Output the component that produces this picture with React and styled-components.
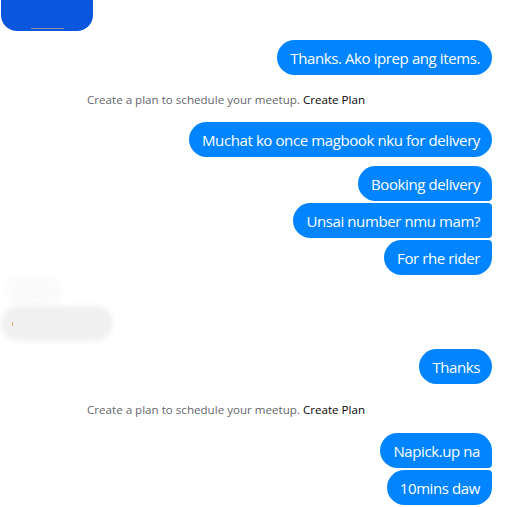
import React from "react";
import styled, { createGlobalStyle, css } from "styled-components";

const Global = createGlobalStyle`
  html, body { margin: 0; padding: 0; background: #ffffff; }
  body { font-family: "Open Sans", "Noto Sans", Arial, sans-serif; }
`;

const Thread = styled.div`
  width: 507px;
  height: 507px;
  overflow: hidden;
  display: flex;
  flex-direction: column;
  background: #fff;
`;

const IncomingTop = styled.div`
  position: relative;
  width: 92px;
  height: 31px;
  margin-left: 1px;
  background: #0a56dc;
  border-radius: 0 0 16px 16px;
  flex-shrink: 0;
`;

const HomeBar = styled.div`
  position: absolute;
  left: 30px;
  bottom: 2px;
  width: 33px;
  height: 1px;
  background: #8a8fa8;
`;

const Row = styled.div`
  display: flex;
  flex-direction: column;
  align-items: flex-end;
  gap: 2px;
  padding-right: 15px;
  margin-top: ${(p) => p.$top || 0}px;
  flex-shrink: 0;
`;

const radius = (pos) => {
  switch (pos) {
    case "first":
      return css`border-radius: 18px 18px 4px 18px;`;
    case "middle":
      return css`border-radius: 18px 4px 4px 18px;`;
    case "last":
      return css`border-radius: 18px 4px 18px 18px;`;
    default:
      return css`border-radius: 18px;`;
  }
};

const Bubble = styled.div`
  box-sizing: border-box;
  height: 35px;
  padding: 0 12px 0 13px;
  display: flex;
  align-items: center;
  background: #0084ff;
  color: #ffffff;
  font-size: 15px;
  letter-spacing: -0.4px;
  line-height: 20px;
  white-space: nowrap;
  ${(p) => radius(p.$pos)}
`;

const Note = styled.div`
  margin-top: ${(p) => p.$top || 0}px;
  padding-left: 87px;
  height: 16px;
  line-height: 16px;
  font-size: 11.6px;
  color: #65676b;
  white-space: nowrap;
  flex-shrink: 0;
`;

const NoteLink = styled.span`
  color: #050505;
`;

const BlurZone = styled.div`
  position: relative;
  height: 66px;
  flex-shrink: 0;
`;

const BlurBlob = styled.div`
  position: absolute;
  left: ${(p) => p.$x}px;
  top: ${(p) => p.$y}px;
  width: ${(p) => p.$w}px;
  height: ${(p) => p.$h}px;
  border-radius: ${(p) => p.$h / 2}px;
  background: ${(p) => p.$bg};
  filter: blur(${(p) => p.$blur}px);
`;

const Speck = styled.div`
  position: absolute;
  left: 12px;
  top: 47px;
  width: 1px;
  height: 4px;
  background: #e0b070;
`;

export default function App() {
  return (
    <>
      <Global />
      <Thread>
        <IncomingTop>
          <HomeBar />
        </IncomingTop>
        <Row $top={9}>
          <Bubble>Thanks. Ako iprep ang items.</Bubble>
        </Row>
        <Note $top={17}>
          Create a plan to schedule your meetup. <NoteLink>Create Plan</NoteLink>
        </Note>
        <Row $top={14}>
          <Bubble>Muchat ko once magbook nku for delivery</Bubble>
        </Row>
        <Row $top={9}>
          <Bubble $pos="first">Booking delivery</Bubble>
          <Bubble $pos="middle">Unsai number nmu mam?</Bubble>
          <Bubble $pos="last">For rhe rider</Bubble>
        </Row>
        <BlurZone>
          <BlurBlob $x={6} $y={2} $w={56} $h={28} $bg="#fafafa" $blur={4} />
          <BlurBlob $x={1} $y={31} $w={112} $h={35} $bg="#f0f0f0" $blur={2.5} />
          <Speck />
        </BlurZone>
        <Row $top={8}>
          <Bubble>Thanks</Bubble>
        </Row>
        <Note $top={18}>
          Create a plan to schedule your meetup. <NoteLink>Create Plan</NoteLink>
        </Note>
        <Row $top={15}>
          <Bubble $pos="first">Napick.up na</Bubble>
          <Bubble $pos="last">10mins daw</Bubble>
        </Row>
      </Thread>
    </>
  );
}
